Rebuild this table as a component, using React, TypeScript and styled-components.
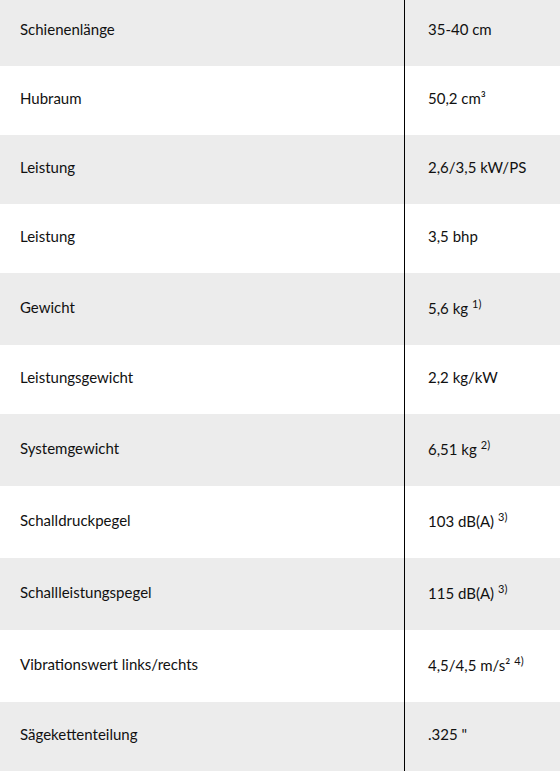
import styled, { createGlobalStyle } from "styled-components";

const GlobalStyle = createGlobalStyle`
  body {
    margin: 0;
    background: #fff;
    font-family: Lato, "Liberation Sans", sans-serif;
    color: #111;
  }
`;

type Spec = { label: string; value: string; note?: string };

const specs: Spec[] = [
  { label: "Schienenlänge", value: "35-40 cm" },
  { label: "Hubraum", value: "50,2 cm³" },
  { label: "Leistung", value: "2,6/3,5 kW/PS" },
  { label: "Leistung", value: "3,5 bhp" },
  { label: "Gewicht", value: "5,6 kg", note: "1)" },
  { label: "Leistungsgewicht", value: "2,2 kg/kW" },
  { label: "Systemgewicht", value: "6,51 kg", note: "2)" },
  { label: "Schalldruckpegel", value: "103 dB(A)", note: "3)" },
  { label: "Schallleistungspegel", value: "115 dB(A)", note: "3)" },
  { label: "Vibrationswert links/rechts", value: "4,5/4,5 m/s²", note: "4)" },
  { label: "Sägekettenteilung", value: ".325 \"" },
];

export default function App() {
  return (
    <>
      <GlobalStyle />
      <Table>
        <tbody>
          {specs.map((s, i) => (
            <Row key={i} $shaded={i % 2 === 0}>
              <Label $noted={!!s.note}>{s.label}</Label>
              <Value $noted={!!s.note}>
                {s.value}
                {s.note && <Note>{s.note}</Note>}
              </Value>
            </Row>
          ))}
        </tbody>
      </Table>
    </>
  );
}

const Table = styled.table`
  width: 560px;
  margin-top: -3px;
  border-collapse: collapse;
  table-layout: fixed;
  font-size: 15px;
  line-height: 21px;
`;

const Row = styled.tr<{ $shaded: boolean }>`
  background-color: ${(p) => (p.$shaded ? "#ececec" : "#fff")};
`;

const Label = styled.td<{ $noted: boolean }>`
  width: 384px;
  padding: ${(p) => (p.$noted ? "24px 0 27px" : "22px 0 26px")} 20px;
  vertical-align: middle;
`;

const Value = styled.td<{ $noted: boolean }>`
  padding: ${(p) => (p.$noted ? "25px" : "22px")} 0 26px 23px;
  border-left: 1px solid #000;
  vertical-align: middle;
`;

const Note = styled.sup`
  position: relative;
  top: -6px;
  margin-left: 4px;
  font-size: 11px;
  line-height: 0;
  vertical-align: baseline;
`;
